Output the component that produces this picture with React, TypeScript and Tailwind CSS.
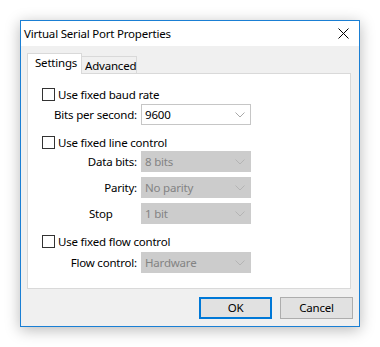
import React from 'react';

function Chevron({ color }: { color: string }) {
  return (
    <svg width="10" height="6" viewBox="0 0 10 6" fill="none">
      <polyline points="0.5,0.5 5,5 9.5,0.5" stroke={color} strokeWidth="1" />
    </svg>
  );
}

function Combo({ value, disabled }: { value: string; disabled?: boolean }) {
  return (
    <div
      className={
        disabled
          ? 'flex h-[21px] w-[110px] items-center justify-between border border-[#cccccc] bg-[#cccccc] pl-[3px] pr-[5px] text-[#838383]'
          : 'flex h-[21px] w-[110px] items-center justify-between border border-[#c6c6c6] bg-white pl-[3px] pr-[5px] text-black'
      }
    >
      <span className="leading-none">{value}</span>
      <Chevron color={disabled ? '#b4b4b4' : '#a8a8a8'} />
    </div>
  );
}

function Check({ label, className }: { label: string; className: string }) {
  return (
    <div className={`flex h-[13px] items-center ${className}`}>
      <div className="h-[13px] w-[13px] border border-[#333333] bg-white" />
      <span className="ml-[3px] leading-none">{label}</span>
    </div>
  );
}

function Row({
  label,
  value,
  disabled,
  className,
  leftLabel,
}: {
  label: string;
  value: string;
  disabled?: boolean;
  className: string;
  leftLabel?: boolean;
}) {
  return (
    <div className={`flex items-center ${className}`}>
      <div className={leftLabel ? 'w-[95px] pl-[47px] text-left' : 'w-[95px] text-right'}>{label}</div>
      <div className="ml-[4px]">
        <Combo value={value} disabled={disabled} />
      </div>
    </div>
  );
}

export default function App() {
  return (
    <div className="h-[347px] w-[380px] bg-white pl-[20px] pt-[20px] font-['Noto_Sans',sans-serif] text-[11.5px] tracking-[-0.2px] text-black">
      <div className="flex h-[307px] w-[340px] flex-col border border-[#1a7fd4] shadow-[0_3px_14px_rgba(0,0,0,0.28)]">
        {/* title bar */}
        <div className="flex h-[25px] items-center justify-between bg-white pl-[3px] pr-[10px]">
          <span className="leading-none">Virtual Serial Port Properties</span>
          <svg width="11" height="11" viewBox="0 0 11 11">
            <path d="M0.5 0.5 L10.5 10.5 M10.5 0.5 L0.5 10.5" stroke="#000" strokeWidth="1" />
          </svg>
        </div>

        {/* body */}
        <div className="flex flex-1 flex-col bg-[#f0f0f0] pl-[6px] pr-[8px] pt-[7px]">
          <div className="flex h-[21px] items-end">
            <div className="relative z-10 flex h-[21px] w-[55px] items-center border-x border-t border-[#d9d9d9] bg-white pl-[7px] pb-[2px]">
              Settings
            </div>
            <div className="flex h-[18px] w-[55px] items-center border-r border-t border-[#d9d9d9] bg-[#f0f0f0] pl-[3px]">
              Advanced
            </div>
          </div>
          <div className="relative -mt-px flex h-[216px] flex-col border border-[#d9d9d9] bg-white pl-[14px] pt-[14px]">
            <Check label="Use fixed baud rate" className="" />
            <Row label="Bits per second:" value="9600" className="mt-[3px]" />

            <Check label="Use fixed line control" className="mt-[11px]" />
            <Row label="Data bits:" value="8 bits" disabled className="mt-[2px]" />
            <Row label="Parity:" value="No parity" disabled className="mt-[5px]" />
            <Row label="Stop" value="1 bit" disabled leftLabel className="mt-[5px]" />

            <Check label="Use fixed flow control" className="mt-[11px]" />
            <Row label="Flow control:" value="Hardware" disabled className="mt-[4px]" />
          </div>

          <div className="mt-[8px] flex justify-end gap-[8px]">
            <button className="flex h-[22px] w-[73px] items-center justify-center border-2 border-[#0078d7] bg-[#e1e1e1]">
              OK
            </button>
            <button className="mr-[-2px] flex h-[22px] w-[73px] items-center justify-center border border-[#adadad] bg-[#e1e1e1]">
              Cancel
            </button>
          </div>
        </div>
      </div>
    </div>
  );
}
